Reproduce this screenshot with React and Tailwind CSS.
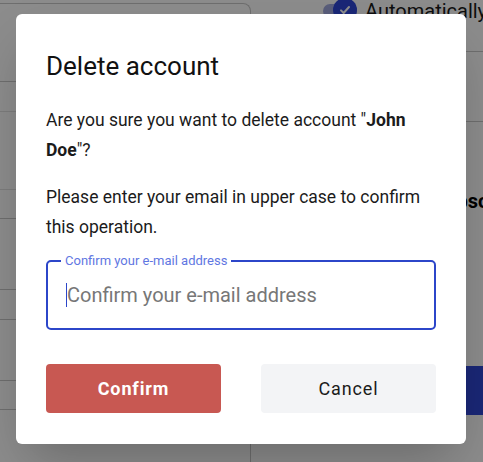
import React from 'react';

const CheckIcon = () => (
  <svg viewBox="0 0 24 24" className="h-4 w-4" fill="none" stroke="white" strokeWidth="3" strokeLinecap="round" strokeLinejoin="round">
    <path d="M6 12.5l4 4 8-9" />
  </svg>
);

export default function App() {
  return (
    <div className="relative h-[462px] w-[483px] overflow-hidden bg-white font-['Roboto',sans-serif] text-[#1b1b1b]">
      {/* page under the dialog */}
      <div className="grid h-full grid-cols-[251px_1fr]">
        <div className="mt-[3px] flex flex-col rounded-tr-lg border-t border-r border-[#c9c9c9]">
          <div className="h-[78px] shrink-0 border-b border-[#c9c9c9]" />
          <div className="h-[30px] shrink-0 border-b border-[#e2e2e2]" />
          <div className="h-[78px] shrink-0 border-b border-[#e2e2e2]" />
          <div className="h-[29px] shrink-0 border-b border-[#c9c9c9]" />
          <div className="h-[71px] shrink-0 border-b border-[#c9c9c9]" />
          <div className="h-[30px] shrink-0 border-b border-[#c9c9c9]" />
          <div className="h-[61px] shrink-0 border-b border-[#c9c9c9]" />
          <div className="h-[29px] shrink-0 border-b border-[#c9c9c9]" />
        </div>
        <div className="flex flex-col">
          <div className="flex h-[52px] shrink-0 items-start gap-2 border-b border-[#c9c9c9] pl-[72px]">
            <div className="relative -mt-[2px] flex items-center">
              <div className="mt-[6px] h-[14px] w-[34px] rounded-full bg-[#a3aade]" />
              <div className="absolute left-[10px] top-0 flex h-[24px] w-[24px] items-center justify-center rounded-full bg-[#3048d8]">
                <CheckIcon />
              </div>
            </div>
            <span className="-mt-[4px] whitespace-nowrap text-[20px]">Automatically</span>
          </div>
          <div className="h-[70px] shrink-0 border-b border-[#c9c9c9]" />
          <h2 className="mt-[64px] whitespace-nowrap pl-[182px] text-[20px] font-bold text-black">Subscription</h2>
          <div className="mt-[150px] ml-[20px] h-[49px] shrink-0 bg-[#3048d8]" />
        </div>
      </div>

      <div className="absolute inset-0 bg-black/45" />

      {/* dialog */}
      <div className="absolute left-4 top-[14px] h-[430px] w-[450px] rounded-md bg-white px-[30px] pt-[36px] shadow-2xl">
        <h1 className="text-[26px] font-normal leading-[32px] text-[#111]">Delete account</h1>
        <p className="mt-[23px] text-[17.5px] leading-[30px]">
          Are you sure you want to delete account "<b className="font-bold">John Doe</b>"?
        </p>
        <p className="mt-[17px] text-[17.5px] leading-[30px]">
          Please enter your email in upper case to confirm this operation.
        </p>
        <div className="relative mt-[18px] h-[70px] rounded-[5px] border-2 border-[#2c46c9]">
          <span className="absolute -top-[9px] left-[13px] bg-white px-[4px] text-[13px] leading-[15px] text-[#5f77e2]">
            Confirm your e-mail address
          </span>
          <input
            placeholder="Confirm your e-mail address"
            className="h-full w-full rounded-[5px] bg-transparent pl-[19px] text-[20px] outline-none placeholder:text-[#777]"
          />
          <span className="absolute left-[18px] top-[21px] h-[24px] w-px bg-[#2c46c9]" />
        </div>
        <div className="mt-[34px] grid grid-cols-2 gap-10">
          <button className="h-[49px] rounded-[4px] bg-[#c85852] text-[18px] font-bold tracking-wider text-white">
            Confirm
          </button>
          <button className="h-[49px] rounded-[4px] bg-[#f3f4f6] text-[18px] font-normal tracking-wider text-[#1b1b1b]">
            Cancel
          </button>
        </div>
      </div>
    </div>
  );
}
